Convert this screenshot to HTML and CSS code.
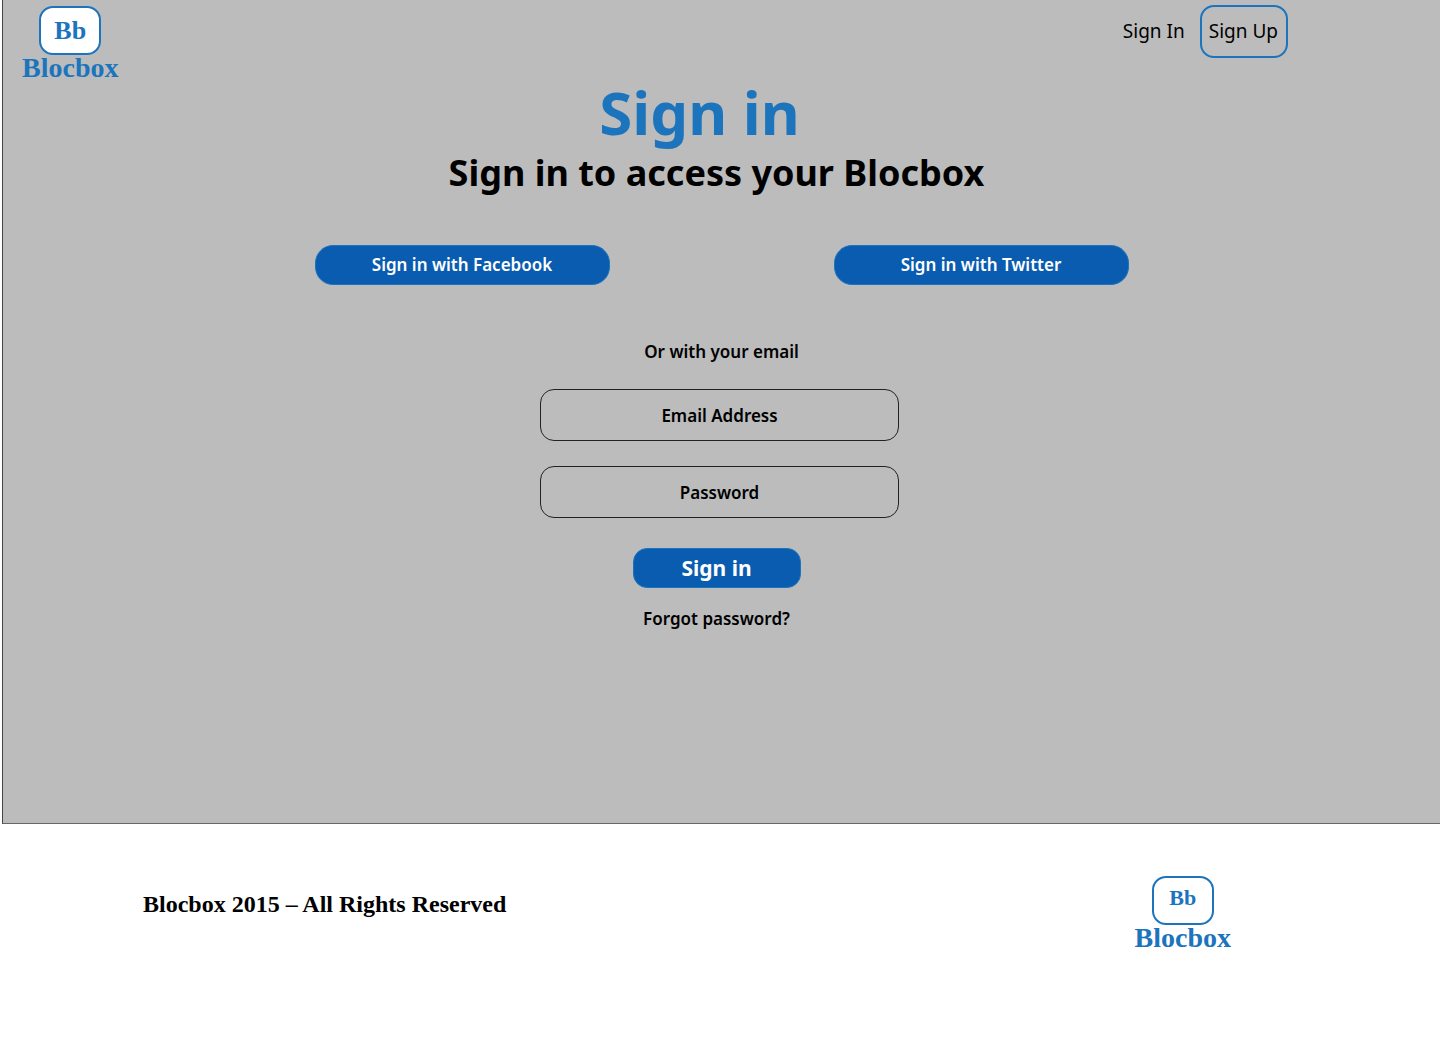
FILE: index.html
```html
<!DOCTYPE html>
<html lang="en">
<head>
  <meta charset="utf-8">
  <meta name="viewport" content="width=device-width, initial-scale=1">
  <title>Sign in - Blocbox</title>
  <link rel="stylesheet" href="styles.css">
</head>
<body>
  <div class="panel">
    <header class="header">
      <a class="logo" href="#">
        <span class="logo-mark">Bb</span>
        <span class="logo-name">Blocbox</span>
      </a>
      <nav class="nav">
        <a class="nav-link" href="#">Sign In</a>
        <a class="nav-link nav-link-boxed" href="#">Sign Up</a>
      </nav>
    </header>
    <main class="main">
      <h1 class="title">Sign in</h1>
      <p class="subtitle">Sign in to access your Blocbox</p>
      <div class="social">
        <button class="button button-social" type="button">Sign in with Facebook</button>
        <button class="button button-social" type="button">Sign in with Twitter</button>
      </div>
      <form class="form">
        <p class="hint">Or with your email</p>
        <input class="field" type="email" placeholder="Email Address" aria-label="Email Address">
        <input class="field" type="password" placeholder="Password" aria-label="Password">
        <div class="actions">
          <button class="button button-submit" type="submit">Sign in</button>
          <a class="forgot" href="#">Forgot password?</a>
        </div>
      </form>
    </main>
  </div>
  <footer class="footer">
    <p class="copyright">Blocbox 2015 – All Rights Reserved</p>
    <a class="logo" href="#">
      <span class="logo-mark logo-mark-small">Bb</span>
      <span class="logo-name">Blocbox</span>
    </a>
  </footer>
</body>
</html>
```
FILE: styles.css
```css
* {
  box-sizing: border-box;
}

body {
  margin: 0;
  background: #fff;
  color: #000;
  font-family: "Noto Sans", "Open Sans", sans-serif;
  font-size: 17px;
  font-weight: 600;
  line-height: 24px;
}

h1,
p {
  margin: 0;
}

a {
  color: inherit;
  text-decoration: none;
}

.panel {
  margin-left: 2px;
  padding-bottom: 192px;
  background: #bcbcbc;
  border-left: 1px solid #444;
  border-bottom: 1px solid #666;
}

.header {
  display: flex;
  justify-content: space-between;
  align-items: flex-start;
  padding: 5px 152px 0 19px;
}

.logo {
  display: flex;
  flex-direction: column;
  align-items: center;
  padding-top: 1px;
  color: #1c75bc;
  font-family: "Liberation Serif", serif;
  font-weight: 700;
}

.logo-mark {
  width: 62px;
  height: 49px;
  border: 2px solid #1c75bc;
  border-radius: 14px;
  background: #fff;
  font-size: 26px;
  line-height: 46px;
  text-align: center;
}

.logo-mark-small {
  font-size: 22px;
  line-height: 40px;
}

.logo-name {
  font-size: 28px;
  line-height: 26px;
}

.nav {
  display: flex;
  gap: 8px;
  font-size: 19px;
  font-weight: 400;
  line-height: 48px;
}

.nav-link {
  padding: 2px 7px;
}

.nav-link-boxed {
  border: 2px solid #1c75bc;
  border-radius: 14px;
  padding: 0 8px 1px 7px;
}

.main {
  display: flex;
  flex-direction: column;
  align-items: center;
}

.title {
  padding-right: 44px;
  color: #1c75bc;
  font-size: 60px;
  font-weight: 700;
  line-height: 62px;
}

.subtitle {
  padding-right: 10px;
  font-size: 36px;
  font-weight: 700;
  line-height: 60px;
}

.social {
  display: flex;
  gap: 224px;
  margin-top: 42px;
}

.button {
  height: 40px;
  padding: 0;
  border: 1px solid #1c75bc;
  background: #0a5cb0;
  color: #fff;
  font: inherit;
}

.button-social {
  width: 295px;
  border-radius: 18px;
}

.form {
  display: flex;
  flex-direction: column;
  align-items: center;
  margin-top: 55px;
}

.hint {
  margin-bottom: 25px;
}

.field {
  width: 359px;
  height: 52px;
  margin: 0 4px 25px 0;
  padding: 0;
  border: 1px solid #222;
  border-radius: 14px;
  background: transparent;
  color: #000;
  font: inherit;
  text-align: center;
}

.field::placeholder {
  color: #000;
  opacity: 1;
}

.actions {
  display: flex;
  flex-direction: column;
  align-items: center;
  gap: 19px;
  margin-top: 5px;
  padding-right: 10px;
}

.button-submit {
  width: 168px;
  border-radius: 14px;
  font-size: 21px;
  font-weight: 700;
}

.footer {
  display: flex;
  justify-content: space-between;
  align-items: flex-start;
  padding: 51px 209px 48px 143px;
}

.copyright {
  padding-top: 17px;
  font-family: "Liberation Serif", serif;
  font-size: 24px;
  font-weight: 700;
}
```
